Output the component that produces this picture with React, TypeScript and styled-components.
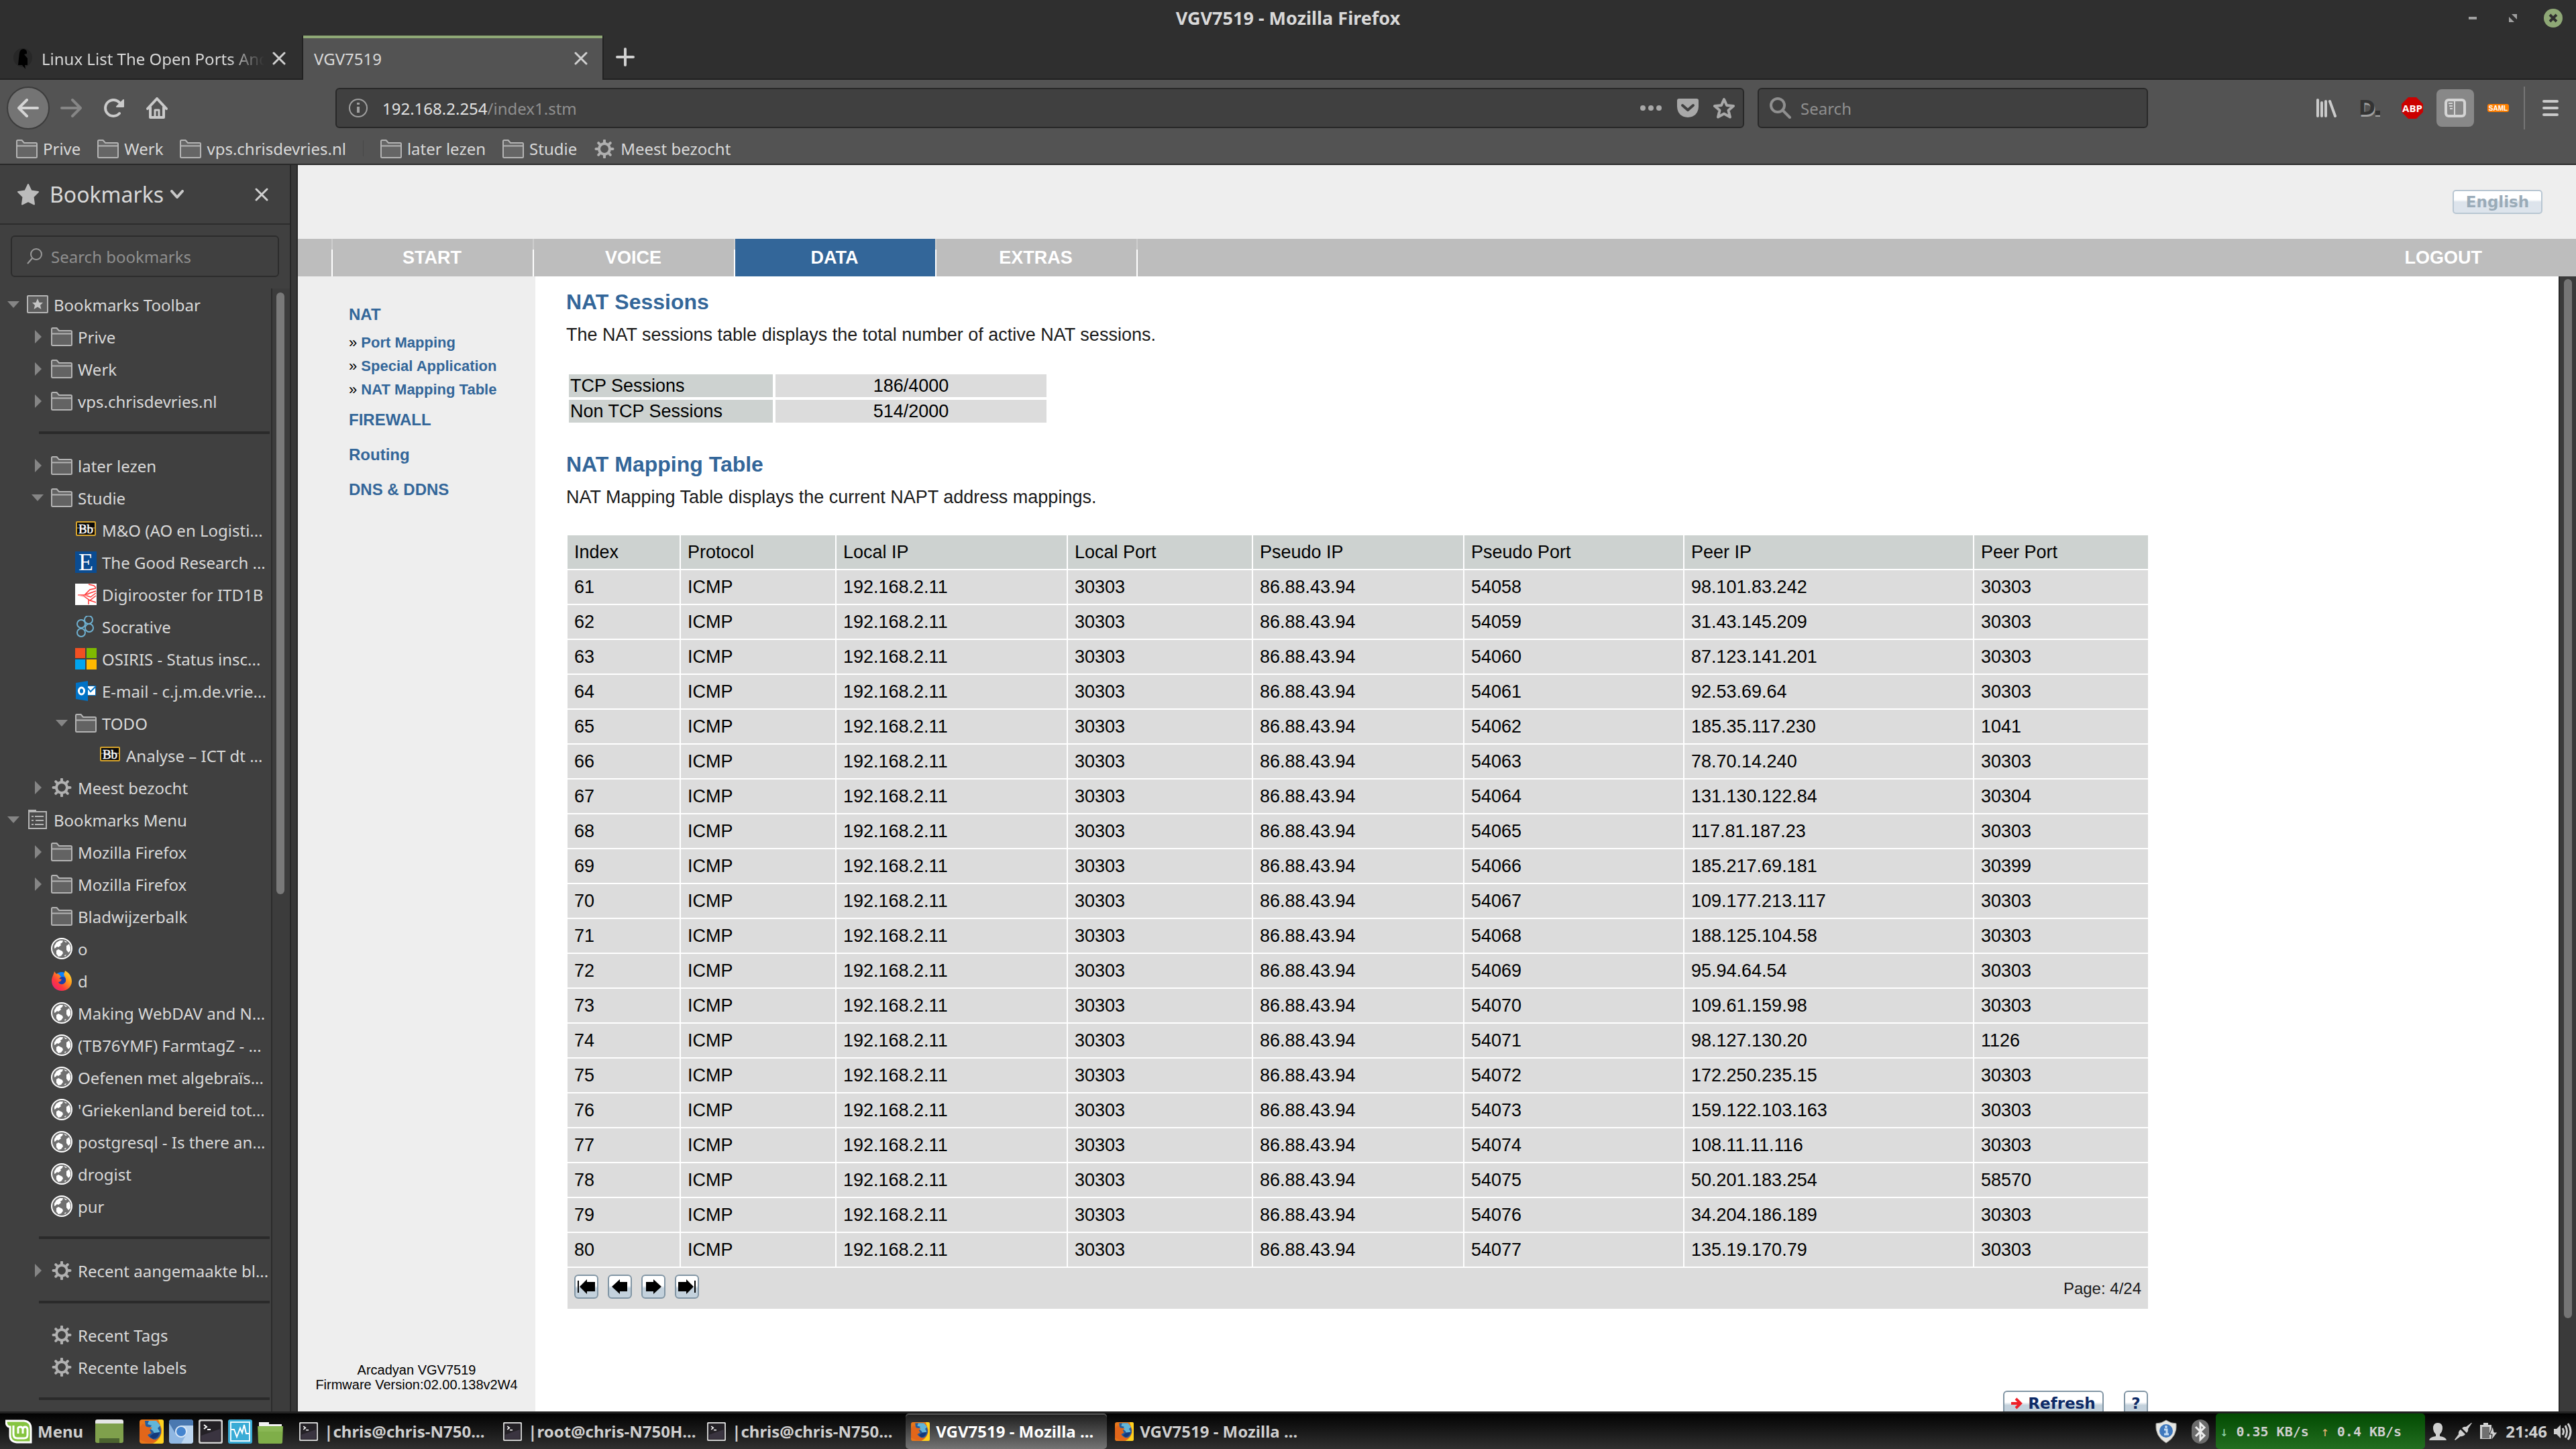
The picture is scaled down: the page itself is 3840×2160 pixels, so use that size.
import React, { useState } from "react";
import styled, { createGlobalStyle, css } from "styled-components";

const GlobalStyle = createGlobalStyle`
  * {
    box-sizing: border-box;
  }
  body {
    margin: 0;
    font-family: "Noto Sans", sans-serif;
    font-size: 24px;
    color: #d9d9d9;
    background-color: #2f2f2f;
  }
  button, input {
    font: inherit;
    color: inherit;
  }
  button {
    padding: 0;
    border: none;
    background: none;
    cursor: pointer;
  }
  ul {
    list-style: none;
    margin: 0;
    padding: 0;
  }
  svg {
    display: block;
    flex: none;
  }
`;

const Desktop = styled.div`
  display: flex;
  flex-direction: column;
  height: 100vh;
  overflow: hidden;
`;

/* window chrome */

const TitleBar = styled.header`
  display: grid;
  grid-template-columns: 1fr auto 1fr;
  align-items: center;

  height: 53px;
  padding: 0 20px;
`;

const Title = styled.h1`
  grid-column: 2;
  margin: 0;
  font-size: 27px;
  font-weight: 700;
`;

const WindowButtons = styled.div`
  display: flex;
  justify-content: flex-end;
  align-items: center;
  gap: 40px;
`;

const TabStrip = styled.div`
  display: flex;
  align-items: stretch;

  height: 66px;
  box-shadow: inset 0 -2px #222222;
`;

const Tab = styled.div<{ $active?: boolean }>`
  display: flex;
  align-items: center;
  gap: 12px;

  width: ${(props) => (props.$active ? 446 : 452)}px;
  padding: ${(props) => (props.$active ? "0 22px 2px 16px" : "2px 26px 0 18px")};
  ${(props) =>
    props.$active &&
    css`
      border-top: 4px solid #8fa876;
      background-color: #535353;
      box-shadow: -2px 0 #222222, 2px 0 #222222;
    `}
`;

const TabLabel = styled.button<{ $fade?: boolean }>`
  flex: 1;
  min-width: 0;
  overflow: hidden;

  text-align: left;
  white-space: nowrap;
  ${(props) =>
    props.$fade &&
    css`
      mask-image: linear-gradient(to right, #000 84%, transparent 100%);
    `}
`;

const NewTab = styled.button`
  display: flex;
  align-items: center;
  padding: 0 20px 2px;
`;

const NavBar = styled.div`
  display: flex;
  align-items: center;

  height: 84px;
  padding: 0 26px 0 10px;
  background-color: #535353;
`;

const NavButtons = styled.div`
  display: flex;
  align-items: center;
  gap: 32px;
  width: 490px;
`;

const BackButton = styled.button`
  display: flex;
  justify-content: center;
  align-items: center;

  width: 64px;
  height: 64px;
  margin-right: -16px;
  border: 2px solid #3c3c3c;
  border-radius: 50%;
  background-color: #747474;
`;

const Field = styled.div`
  display: flex;
  align-items: center;

  height: 60px;
  border: 2px solid #282828;
  border-radius: 6px;
  color: #8f8f8f;
  background-color: #404040;
`;

const UrlField = styled(Field)`
  flex: 1;
  gap: 22px;
  padding: 0 12px 0 18px;
`;

const Url = styled.button`
  flex: 1;
  text-align: left;
  b {
    font-weight: 400;
    color: #e2e2e2;
  }
`;

const SearchField = styled(Field)`
  gap: 14px;
  width: 582px;
  margin: 0 234px 0 20px;
  padding: 0 16px;
`;

const TextInput = styled.input`
  flex: 1;
  min-width: 0;
  padding: 0;
  border: none;
  outline: none;
  background: none;
  &::placeholder {
    color: #8f8f8f;
    opacity: 1;
  }
`;

const Tools = styled.div`
  display: flex;
  align-items: center;
`;

const ToolButton = styled.button<{ $on?: boolean }>`
  display: flex;
  justify-content: center;
  align-items: center;

  width: ${(props) => (props.$on ? 56 : 64)}px;
  height: 56px;
  border-radius: 8px;
  ${(props) =>
    props.$on &&
    css`
      margin: 0 4px;
      background-color: #888888;
    `}
`;

const ToolDivider = styled.span`
  width: 2px;
  height: 64px;
  margin: 0 26px 0 6px;
  background-color: #757575;
`;

const BookmarkBar = styled.nav`
  display: flex;
  align-items: flex-start;
  gap: 25px;

  height: 43px;
  padding: 2px 24px 0;
  border-bottom: 2px solid #282828;
  background-color: #535353;
`;

const BookmarkLink = styled.a`
  display: flex;
  align-items: center;
  gap: 8px;

  color: inherit;
  line-height: 34px;
  text-decoration: none;
  white-space: nowrap;
`;

const BarDivider = styled.span`
  width: 1px;
  height: 24px;
  margin-top: 4px;
  background-color: #484848;
`;

const Body = styled.div`
  flex: 1;
  display: flex;
  min-height: 0;
`;

/* bookmarks sidebar */

const Sidebar = styled.aside`
  display: flex;
  flex-direction: column;

  width: 444px;
  border-right: 2px solid #282828;
  background-color: #404040;
  box-shadow: inset -8px 0 #383838, inset -10px 0 #282828;
`;

const SidebarHeader = styled.div`
  display: flex;
  align-items: center;

  height: 89px;
  margin-right: 10px;
  padding: 0 32px 0 26px;
  border-bottom: 2px solid #2c2c2c;
`;

const SidebarTitle = styled.button`
  flex: 1;
  display: flex;
  align-items: center;
  gap: 10px;
  font-size: 32px;
  svg:first-child {
    margin-right: 6px;
  }
`;

const SidebarSearch = styled(Field)`
  gap: 12px;
  height: 62px;
  margin: 16px 26px 17px 16px;
  padding: 0 22px;
  border-color: #2c2c2c;
`;

const TreeArea = styled.div`
  flex: 1;
  display: flex;
  min-height: 0;
  margin-right: 10px;
`;

const Tree = styled.ul`
  flex: 1;
  min-width: 0;
  overflow: hidden;
`;

const TreeRow = styled.li<{ $level: number }>`
  display: flex;
  align-items: center;

  height: 48px;
  padding-left: ${(props) => props.$level * 36 - 26}px;
  white-space: nowrap;
`;

const Twisty = styled.span`
  display: flex;
  justify-content: center;
  width: 20px;
  margin-right: 10px;
`;

const TreeLabel = styled.span`
  margin-left: 8px;
`;

const TreeSeparator = styled.li`
  height: 4px;
  margin: 21px 2px 23px 58px;
  background-color: #2a2a2a;
`;

const SidebarTrack = styled.div`
  width: 28px;
  padding: 6px;
  border-left: 2px solid #2c2c2c;
  background-color: #3c3c3c;
`;

const SidebarThumb = styled.div`
  width: 12px;
  height: 54%;
  border-radius: 6px;
  background-color: #797979;
`;

/* router page */

const Page = styled.div`
  flex: 1;
  display: flex;
  flex-direction: column;

  min-width: 0;
  font-family: "Liberation Sans", Arial, sans-serif;
  color: #000000;
  background-color: #ffffff;
`;

const PageHeader = styled.div`
  display: flex;
  justify-content: flex-end;

  height: 110px;
  padding: 37px 50px 0;
  background-color: #eeeeee;
`;

const LanguageButton = styled.button`
  width: 134px;
  height: 36px;

  border: 2px solid #b8c6d2;
  border-radius: 5px;
  font-family: "DejaVu Sans", sans-serif;
  font-size: 23px;
  font-weight: 700;
  line-height: 32px;
  color: #9aabb8;
  background: linear-gradient(#ffffff 40%, #dde4ec 50%);
`;

const MainNav = styled.nav`
  display: flex;

  height: 56px;
  padding: 0 140px 0 50px;
  font-size: 27px;
  font-weight: 700;
  line-height: 57px;
  text-align: center;
  background-color: #bdbdbd;
  a {
    color: #ffffff;
    text-decoration: none;
  }
`;

const MainNavLink = styled.a<{ $active?: boolean }>`
  width: 300px;
  background: linear-gradient(#cecece 16px, #ffffff 16px) left / 2px 100% no-repeat
    ${(props) => (props.$active ? "#336699" : "#bdbdbd")};
`;

const LogoutLink = styled.a`
  flex: 1;
  text-align: right;
  background: linear-gradient(#cecece 16px, #ffffff 16px) left / 2px 100% no-repeat;
`;

const Frames = styled.div`
  flex: 1;
  display: flex;
  min-height: 0;
`;

const SideNav = styled.nav`
  display: flex;
  flex-direction: column;

  width: 354px;
  padding: 31px 0 29px;
  background-color: #eeeeee;
  a {
    font-weight: 700;
    color: #336699;
    text-decoration: none;
  }
`;

const SideItem = styled.li`
  padding-left: 76px;
  font-size: 24px;
  line-height: 52px;
`;

const SubList = styled.ul`
  margin: -2px 0 2px;
`;

const SubItem = styled.li`
  padding-left: 76px;
  font-size: 22px;
  line-height: 35px;
`;

const Firmware = styled.p`
  margin: auto 0 0;
  font-size: 20px;
  line-height: 22px;
  text-align: center;
`;

const Content = styled.main`
  flex: 1;
  padding: 19px 46px 0;
  overflow: hidden;
  font-size: 27px;
`;

const Heading = styled.h2`
  margin: 0;
  font-size: 32px;
  line-height: 38px;
  color: #336699;
`;

const Description = styled.p`
  margin: 14px 0 0;
  line-height: 32px;
  color: #1a1a1a;
`;

const SessionTable = styled.table`
  width: 720px;
  margin: 39px 0;
  border-spacing: 4px;
  table-layout: fixed;
  line-height: 30px;
  th {
    width: 304px;
    padding: 2px;
    font-weight: 400;
    text-align: left;
    background-color: #cdd2d0;
  }
  td {
    padding: 2px;
    text-align: center;
    background-color: #dcdcdc;
  }
`;

const MappingTable = styled.table`
  width: 100%;
  max-width: 2360px;
  margin-top: 39px;
  border-spacing: 2px;
  table-layout: fixed;
  th,
  td {
    height: 50px;
    padding: 0 10px;
    font-weight: 400;
    text-align: left;
  }
  th {
    background-color: #cdd2d0;
  }
  td {
    background-color: #dcdcdc;
  }
`;

const Pager = styled.div`
  display: flex;
  align-items: center;
  gap: 14px;

  height: 61px;
  padding-bottom: 5px;
  span {
    margin-left: auto;
    font-size: 24px;
    line-height: 28px;
    padding-top: 5px;
    color: #1a1a1a;
  }
`;

const glossy = css`
  border: 2px solid #8195a4;
  border-radius: 6px;
  background: linear-gradient(#ffffff 45%, #c3d1dc 58%);
`;

const PagerButton = styled.button`
  display: flex;
  justify-content: center;
  align-items: center;

  width: 36px;
  height: 36px;
  ${glossy}
`;

const Actions = styled.div`
  display: flex;
  align-items: flex-start;
  justify-content: flex-end;
  gap: 30px;

  max-width: 2360px;
  margin-top: 120px;
  padding-right: 2px;
`;

const ActionButton = styled.button<{ $wide?: boolean }>`
  display: flex;
  justify-content: center;
  align-items: center;
  gap: 8px;

  width: ${(props) => (props.$wide ? 150 : 36)}px;
  height: 38px;
  font-family: "DejaVu Sans", sans-serif;
  font-size: 23px;
  font-weight: 700;
  color: #0d2a66;
  ${glossy}
`;

const PageTrack = styled.div`
  width: 26px;
  padding: 4px 6px;
  border-left: 2px solid #282828;
  background-color: #3a3a3a;
`;

const PageThumb = styled.div`
  width: 12px;
  height: 92%;
  border-radius: 6px;
  background-color: #757575;
`;

/* desktop panel */

const Taskbar = styled.footer`
  display: flex;
  align-items: stretch;

  height: 56px;
  border-top: 3px solid #222222;
  font-weight: 700;
  color: #cfcfcf;
  background: linear-gradient(#020202, #303030);
`;

const MenuButton = styled.button`
  display: flex;
  align-items: center;
  gap: 8px;
  padding: 0 18px 0 8px;
`;

const Launchers = styled.div`
  display: flex;
  align-items: center;
  gap: 8px;
  margin: 0 16px 0 24px;
`;

const Launcher = styled.button``;

const Tasks = styled.div`
  flex: 1;
  display: flex;
  gap: 4px;
`;

const Task = styled.button<{ $active?: boolean }>`
  display: flex;
  align-items: center;
  gap: 9px;

  width: 300px;
  padding: 0 8px;
  border-radius: 5px;
  white-space: nowrap;
  overflow: hidden;
  ${(props) =>
    props.$active &&
    css`
      color: #ffffff;
      background: linear-gradient(#1c1c1c, #747474);
      box-shadow: inset 0 2px #555555;
    `}
`;

const Tray = styled.div`
  display: flex;
  align-items: center;
  padding-right: 5px;
`;

const Applets = styled.div`
  display: flex;
  align-items: center;
  gap: 20px;
  padding-right: 10px;
`;

const StatusIcons = styled.div`
  display: flex;
  align-items: center;
  gap: 12px;
  padding: 0 2px 0 6px;
`;

const NetSpeed = styled.div`
  display: flex;
  align-items: center;
  gap: 12px;

  height: 53px;
  width: 312px;
  padding-left: 6px;
  border-radius: 5px;
  font-family: "DejaVu Sans Mono", monospace;
  font-size: 20px;
  background: linear-gradient(#024b02, #236e20);
  span {
    font-weight: 400;
    color: #8fd0a8;
  }
  span:nth-of-type(2) {
    margin-left: 6px;
    color: #e0b070;
  }
`;

const Clock = styled.time`
  margin: 0 10px;
`;

/* icons */

const Close = ({ size = 20 }: { size?: number }) => (
  <svg width={size} height={size} viewBox="0 0 20 20" stroke="#d0d0d0" strokeWidth="3" strokeLinecap="round">
    <path d="M2 2L18 18M18 2L2 18" />
  </svg>
);

const Folder = () => (
  <svg width="32" height="28" viewBox="0 0 32 28" fill="#6b6b6b" fillOpacity="0.8" stroke="#b4b4b4" strokeWidth="2" strokeLinejoin="round">
    <path d="M1 26V2.500Q1 1 2.500 1H8.500L12 5H29.500Q31 5 31 6.500V25.500Q31 27 29.500 27H2.500Q1 27 1 25.500Z" />
    <path d="M1 9.500H31" />
  </svg>
);

const Gear = () => (
  <svg width="32" height="28" viewBox="-16 -14 32 28" fill="none" stroke="#b0b0b0">
    <circle r="8" strokeWidth="4" />
    {[0, 45, 90, 135, 180, 225, 270, 315].map((a) => (
      <path key={a} d="M0 -9V-12.500" strokeWidth="4" strokeLinecap="round" transform={`rotate(${a})`} />
    ))}
  </svg>
);

const Globe = () => (
  <svg width="32" height="32" viewBox="0 0 32 32">
    <circle cx="16" cy="16" r="15" fill="#707070" stroke="#fff" strokeWidth="2" />
    <path
      fill="#fff"
      d="M5 12L8 7L13 4L18 4L17 7L14 9L15 11L11 14L9 13L7 15L5 16ZM19 4L24 6L22 7ZM23 12L27 9L29 14V19L26 22L23 18ZM8 19L11 17L17 20L18 23L15 27L11 28L8 24ZM20 26L23 25L21 28Z"
    />
  </svg>
);

const Blackboard = () => (
  <svg width="32" height="32" viewBox="0 0 32 32">
    <rect x="2" y="4" width="28" height="20" rx="1" fill="#080808" stroke="#d8a52c" strokeWidth="2" />
    <path d="M3 13H29" stroke="#5a5a5a" strokeWidth="2" />
    <text x="16" y="21" textAnchor="middle" fontFamily="Liberation Serif, serif" fontSize="19" fill="#fff" stroke="#fff" strokeWidth="0.500">
      Bb
    </text>
  </svg>
);

const Elsevier = () => (
  <svg width="32" height="32" viewBox="0 0 32 32">
    <rect width="32" height="32" fill="#0a4c92" />
    <text x="16" y="28" textAnchor="middle" fontFamily="Liberation Serif, serif" fontSize="36" fill="#fff">
      E
    </text>
  </svg>
);

const Rooster = () => (
  <svg width="32" height="32" viewBox="0 0 32 32" fill="none" stroke="#f33" strokeWidth="1.500">
    <rect width="32" height="32" fill="#fff" stroke="none" />
    <path d="M4 17H14L22 9L31 7M14 17L31 11M14 17L23 20L31 14M12 18L22 25L31 18M20 24V31M22 25L31 28M20 1L28 3L31 6" />
    <path d="M4 17L13 19L20 16" stroke="#f99" />
  </svg>
);

const Socrative = () => (
  <svg width="32" height="32" viewBox="0 0 32 32" fill="none" stroke="#6fb1d1" strokeWidth="2">
    <circle cx="20" cy="6" r="6" />
    <circle cx="9" cy="12" r="6" />
    <circle cx="21" cy="18" r="6" />
    <circle cx="9" cy="25" r="6" />
  </svg>
);

const Microsoft = () => (
  <svg width="32" height="32" viewBox="0 0 32 32">
    <path fill="#f25022" d="M0 0H15V15H0Z" />
    <path fill="#7fba00" d="M17 0H32V15H17Z" />
    <path fill="#00a4ef" d="M0 17H15V32H0Z" />
    <path fill="#ffb900" d="M17 17H32V32H17Z" />
  </svg>
);

const Outlook = () => (
  <svg width="32" height="32" viewBox="0 0 32 32">
    <path fill="#fff" stroke="#0072c6" d="M18 8.500H30.500V22.500H18Z" />
    <path fill="none" stroke="#0072c6" strokeWidth="2" d="M19 12L23 17L31 9" />
    <path fill="#0072c6" d="M1 4L19 1V31L1 28Z" />
    <ellipse cx="9.500" cy="16" rx="4" ry="5" fill="none" stroke="#fff" strokeWidth="3" />
  </svg>
);

const FirefoxFlame = () => (
  <svg width="32" height="32" viewBox="0 0 32 32">
    <defs>
      <linearGradient id="flame" x1="0" y1="1" x2="1" y2="0">
        <stop offset="0" stopColor="#e31587" />
        <stop offset="0.350" stopColor="#ff3b3b" />
        <stop offset="0.650" stopColor="#ff9a1a" />
        <stop offset="1" stopColor="#fff04a" />
      </linearGradient>
    </defs>
    <circle cx="16" cy="15" r="12" fill="#0a84ff" />
    <circle cx="17" cy="17" r="7" fill="#1b3fa8" />
    <path
      fill="url(#flame)"
      d="M21 1C29 5 31 12 31 17C31 25 24 31 16 31C8 31 1 25 1 16C1 11 4 7 5 2L8 6C10 5 12 6 13 8L15 10L12 13L16 14L14 17L11 18C13 23 20 22 22 17C23 12 20 9 19 7Z"
    />
  </svg>
);

const ToolbarFolder = () => (
  <svg width="32" height="28" viewBox="0 0 32 28">
    <rect x="1" y="1" width="30" height="25" rx="1" fill="#5c5c5c" stroke="#b4b4b4" strokeWidth="2" />
    <path fill="#c4c4c4" d="M16 5L18.500 11H24L20 15L21.500 21L16 17.500L10.500 21L12 15L8 11H13.500Z" />
  </svg>
);

const MenuFolder = () => (
  <svg width="32" height="30" viewBox="0 0 32 30" fill="none" stroke="#b4b4b4" strokeWidth="2">
    <path d="M3 3H29V28H3Z" fill="#4a4a4a" />
    <path d="M2 1.500H14" strokeWidth="3" />
    <path d="M7 10H10M12 10H25M7 16H10M13 16H25M7 22H10M12 22H25" />
  </svg>
);

const SolidStar = () => (
  <svg width="32" height="32" viewBox="0 0 32 32">
    <path
      fill="#bcbcbc"
      stroke="#bcbcbc"
      strokeWidth="2"
      strokeLinejoin="round"
      d="M16 1L20.500 10.500L31 12L23.500 19.500L25 30.500L16 26L7 30.500L8.500 19.500L1 12L11.500 10.500Z"
    />
  </svg>
);

const Arrow = ({ open }: { open: boolean }) => (
  <svg width="20" height="20" viewBox="0 0 20 20" fill="#858585">
    <path d={open ? "M1 5H19L10 15Z" : "M6 0V20L16 10Z"} />
  </svg>
);

const FirefoxBox = ({ size }: { size: number }) => (
  <svg width={size} height={size} viewBox="0 0 36 36">
    <rect width="36" height="36" rx="4" fill="#e8771a" />
    <path fill="#ffd21f" d="M28 0H33Q36 0 36 3V33Q36 36 33 36H20Q34 28 33 14Z" />
    <path fill="#235c9e" d="M8 2H24Q33 8 32 20Q29 31 19 31Q12 30 11 23L17 18L9 11Z" />
    <path fill="#62b5d8" d="M14 2H25L31 9L27 13L30 18L24 24L20 17L15 13L18 9L12 7Z" />
    <path fill="#e2661a" d="M0 12L5 6L11 11L19 12L14 17L18 20L12 23Q17 31 27 30Q20 36 10 34L0 30Z" />
    <path fill="#15397a" d="M22 20L30 19Q28 28 20 29L15 25Z" />
  </svg>
);

const Terminal = ({ size }: { size: number }) => (
  <svg width={size} height={size} viewBox="0 0 36 36">
    <rect x="1" y="1" width="34" height="34" rx="3" fill="#242126" stroke="#cfcfcf" strokeWidth="3" />
    <path d="M4 24L32 14V32H4Z" fill="#3a3440" />
    <path d="M8 8L12 11L8 14M13 15H18" fill="none" stroke="#fff" strokeWidth="2" />
  </svg>
);

const ChromiumBox = () => (
  <svg width="36" height="36" viewBox="0 0 36 36">
    <rect width="36" height="36" rx="4" fill="#8fb7e2" />
    <path fill="#4a78b0" d="M0 4Q0 0 4 0H32Q36 0 36 4V9H18L9 20L0 5Z" />
    <path fill="#bcd6f0" d="M18 9H36V32Q36 36 32 36H18L27 20Z" />
    <circle cx="18" cy="18" r="8" fill="#4585cf" stroke="#dce9f7" strokeWidth="2" />
  </svg>
);

const MonitorBox = () => (
  <svg width="36" height="36" viewBox="0 0 36 36" fill="none">
    <rect width="36" height="36" rx="3" fill="#39acd6" />
    <rect x="4" y="4" width="28" height="28" stroke="#e8f7fc" strokeWidth="2" />
    <path d="M5 15H9L13 26L18 13L21 20L24 8L27 21H31" stroke="#fff" strokeWidth="2" />
  </svg>
);

const FilesBox = () => (
  <svg width="38" height="36" viewBox="0 0 38 36">
    <path fill="#f2f2f2" d="M2 4H17V7H36V14H2Z" />
    <path fill="#7fae49" d="M0 10H38L37 34Q37 36 35 36H3Q1 36 1 34Z" />
    <path fill="#94c05f" d="M1 11H37V18H1Z" opacity="0.500" />
  </svg>
);

const ShowDesktop = () => (
  <svg width="42" height="36" viewBox="0 0 42 36">
    <rect y="1" width="42" height="34" rx="3" fill="#7fa04c" />
    <path fill="#e6e6e6" d="M0 6V3Q0 0 3 0H39Q42 0 42 3V6Z" />
    <path fill="#4b6330" d="M6 28H36V35H6Z" />
  </svg>
);

const Mint = () => (
  <svg width="40" height="36" viewBox="0 0 40 36" fill="none">
    <path d="M1 2H28Q38 3 38 14V34H17Q7 33 7 24V11Q1 11 1 2Z" fill="#86c440" stroke="#fff" strokeWidth="3" />
    <path d="M12 9V22Q12 28 18 28H28Q33 28 33 23V15Q33 11 29.500 11T26 15V21M26 15Q26 11 22 11T19 15V21" stroke="#fff" strokeWidth="3" />
  </svg>
);

const ArrowStep = ({ back, edge }: { back?: boolean; edge?: boolean }) => (
  <svg width="30" height="24" viewBox="0 0 30 24" fill="#000">
    <g transform={back ? "translate(30 0) scale(-1 1)" : undefined}>
      <path d={edge ? "M2 5H14V1L25 12L14 23V19H2Z" : "M4 5H15V1L27 12L15 23V19H4Z"} />
      {edge && <path d="M26 3H28V21H26Z" />}
    </g>
  </svg>
);

/* data */

interface ITreeItem {
  label: string;
  level: number;
  icon: React.ReactNode;
  open?: boolean;
}

const tree: (ITreeItem | null)[] = [
  { label: "Bookmarks Toolbar", level: 1, icon: <ToolbarFolder />, open: true },
  { label: "Prive", level: 2, icon: <Folder />, open: false },
  { label: "Werk", level: 2, icon: <Folder />, open: false },
  { label: "vps.chrisdevries.nl", level: 2, icon: <Folder />, open: false },
  null,
  { label: "later lezen", level: 2, icon: <Folder />, open: false },
  { label: "Studie", level: 2, icon: <Folder />, open: true },
  { label: "M&O (AO en Logisti...", level: 3, icon: <Blackboard /> },
  { label: "The Good Research ...", level: 3, icon: <Elsevier /> },
  { label: "Digirooster for ITD1B", level: 3, icon: <Rooster /> },
  { label: "Socrative", level: 3, icon: <Socrative /> },
  { label: "OSIRIS - Status insc...", level: 3, icon: <Microsoft /> },
  { label: "E-mail - c.j.m.de.vrie...", level: 3, icon: <Outlook /> },
  { label: "TODO", level: 3, icon: <Folder />, open: true },
  { label: "Analyse – ICT dt ...", level: 4, icon: <Blackboard /> },
  { label: "Meest bezocht", level: 2, icon: <Gear />, open: false },
  { label: "Bookmarks Menu", level: 1, icon: <MenuFolder />, open: true },
  { label: "Mozilla Firefox", level: 2, icon: <Folder />, open: false },
  { label: "Mozilla Firefox", level: 2, icon: <Folder />, open: false },
  { label: "Bladwijzerbalk", level: 2, icon: <Folder /> },
  { label: "o", level: 2, icon: <Globe /> },
  { label: "d", level: 2, icon: <FirefoxFlame /> },
  { label: "Making WebDAV and N...", level: 2, icon: <Globe /> },
  { label: "(TB76YMF) FarmtagZ - ...", level: 2, icon: <Globe /> },
  { label: "Oefenen met algebraïs...", level: 2, icon: <Globe /> },
  { label: "'Griekenland bereid tot...", level: 2, icon: <Globe /> },
  { label: "postgresql - Is there an...", level: 2, icon: <Globe /> },
  { label: "drogist", level: 2, icon: <Globe /> },
  { label: "pur", level: 2, icon: <Globe /> },
  null,
  { label: "Recent aangemaakte bl...", level: 2, icon: <Gear />, open: false },
  null,
  { label: "Recent Tags", level: 2, icon: <Gear /> },
  { label: "Recente labels", level: 2, icon: <Gear /> },
  null,
];

const columns = [
  { name: "Index", width: 167 },
  { name: "Protocol", width: 230 },
  { name: "Local IP", width: 343 },
  { name: "Local Port", width: 274 },
  { name: "Pseudo IP", width: 313 },
  { name: "Pseudo Port", width: 326 },
  { name: "Peer IP", width: 430 },
  { name: "Peer Port", width: 259 },
];

// pseudo port, peer ip, peer port
const mappings: [number, string, number][] = [
  [54058, "98.101.83.242", 30303],
  [54059, "31.43.145.209", 30303],
  [54060, "87.123.141.201", 30303],
  [54061, "92.53.69.64", 30303],
  [54062, "185.35.117.230", 1041],
  [54063, "78.70.14.240", 30303],
  [54064, "131.130.122.84", 30304],
  [54065, "117.81.187.23", 30303],
  [54066, "185.217.69.181", 30399],
  [54067, "109.177.213.117", 30303],
  [54068, "188.125.104.58", 30303],
  [54069, "95.94.64.54", 30303],
  [54070, "109.61.159.98", 30303],
  [54071, "98.127.130.20", 1126],
  [54072, "172.250.235.15", 30303],
  [54073, "159.122.103.163", 30303],
  [54074, "108.11.11.116", 30303],
  [54075, "50.201.183.254", 58570],
  [54076, "34.204.186.189", 30303],
  [54077, "135.19.170.79", 30303],
];

const sections = ["START", "VOICE", "DATA", "EXTRAS"];

const Chrome = () => (
  <>
    <TitleBar>
      <Title>VGV7519 - Mozilla Firefox</Title>
      <WindowButtons>
        <button aria-label="Minimize">
          <svg width="20" height="28" viewBox="0 0 20 28">
            <path fill="#a0a0a0" d="M8 12H20V16H8Z" />
          </svg>
        </button>
        <button aria-label="Restore">
          <svg width="20" height="28" viewBox="0 0 20 28">
            <path fill="#a0a0a0" d="M12 8H20V16ZM8 12L16 20H8Z" />
          </svg>
        </button>
        <button aria-label="Close">
          <svg width="28" height="28" viewBox="0 0 28 28">
            <circle cx="14" cy="14" r="14" fill="#8fa876" />
            <path d="M9 9L19 19M19 9L9 19" stroke="#2f2f2f" strokeWidth="4" />
          </svg>
        </button>
      </WindowButtons>
    </TitleBar>
    <TabStrip>
      <Tab>
        <svg width="32" height="32" viewBox="0 0 32 32">
          <circle cx="16" cy="15" r="14" fill="#272727" />
          <path fill="#000" d="M11 8Q12 2 17 2Q23 3 22 9L18 10L23 16V26H19L20 32L15 26H9L10 16Z" />
        </svg>
        <TabLabel $fade>Linux List The Open Ports And</TabLabel>
        <button aria-label="Close tab">
          <Close />
        </button>
      </Tab>
      <Tab $active>
        <TabLabel>VGV7519</TabLabel>
        <button aria-label="Close tab">
          <Close />
        </button>
      </Tab>
      <NewTab aria-label="New tab">
        <svg width="28" height="28" viewBox="0 0 28 28" stroke="#d0d0d0" strokeWidth="4" strokeLinecap="round">
          <path d="M14 2V26M2 14H26" />
        </svg>
      </NewTab>
    </TabStrip>
    <NavBar>
      <NavButtons>
        <BackButton aria-label="Back">
          <svg width="32" height="28" viewBox="0 0 32 28" fill="none" stroke="#d4d4d4" strokeWidth="4" strokeLinecap="round" strokeLinejoin="round">
            <path d="M30 14H3M14 2L2 14L14 26" />
          </svg>
        </BackButton>
        <button aria-label="Forward">
          <svg width="32" height="28" viewBox="0 0 32 28" fill="none" stroke="#868686" strokeWidth="4" strokeLinecap="round" strokeLinejoin="round">
            <path d="M2 14H29M18 2L30 14L18 26" />
          </svg>
        </button>
        <button aria-label="Reload">
          <svg width="32" height="28" viewBox="0 0 32 28" fill="none" stroke="#cacaca" strokeWidth="4" strokeLinecap="round" strokeLinejoin="round">
            <path d="M24 22A12 12 0 1 1 26 9" />
            <path d="M30 2V12H20Z" fill="#cacaca" strokeWidth="2" />
          </svg>
        </button>
        <button aria-label="Home">
          <svg width="32" height="32" viewBox="0 0 32 32" fill="none" stroke="#cacaca" strokeWidth="4" strokeLinecap="round" strokeLinejoin="round">
            <path d="M2 17L16 2L30 17M6 15V30H26V15" />
            <path d="M13 29V19H19V29" strokeWidth="3" />
          </svg>
        </button>
      </NavButtons>
      <UrlField>
        <svg width="28" height="28" viewBox="0 0 28 28" fill="none" stroke="#a0a0a0" strokeWidth="2">
          <circle cx="14" cy="14" r="13" />
          <path d="M14 12V21M14 6V9" strokeWidth="4" />
        </svg>
        <Url>
          <b>192.168.2.254</b>/index1.stm
        </Url>
        <svg width="34" height="10" viewBox="0 0 34 10" fill="#a8a8a8">
          <circle cx="5" cy="5" r="4" />
          <circle cx="17" cy="5" r="4" />
          <circle cx="29" cy="5" r="4" />
        </svg>
        <svg width="32" height="28" viewBox="0 0 32 28">
          <path fill="#a8a8a8" d="M3 0H29Q32 0 32 3V12Q31 27 16 28Q1 27 0 12V3Q0 0 3 0Z" />
          <path d="M8 10L16 17L24 10" fill="none" stroke="#404040" strokeWidth="4" strokeLinecap="round" strokeLinejoin="round" />
        </svg>
        <svg width="32" height="32" viewBox="0 0 32 32" fill="none" stroke="#a8a8a8" strokeWidth="4" strokeLinejoin="round">
          <path d="M16 3L20 12L30 13L22.500 19.500L25 29.500L16 24.500L7 29.500L9.500 19.500L2 13L12 12Z" />
        </svg>
      </UrlField>
      <SearchField>
        <svg width="32" height="32" viewBox="0 0 32 32" fill="none" stroke="#8f8f8f" strokeWidth="4" strokeLinecap="round">
          <circle cx="12" cy="12" r="10" />
          <path d="M19 19L30 30" />
        </svg>
        <TextInput aria-label="Search" placeholder="Search" />
      </SearchField>
      <Tools>
        <ToolButton aria-label="Library">
          <svg width="32" height="28" viewBox="0 0 32 28" stroke="#cacaca" strokeWidth="4" strokeLinecap="round">
            <path d="M3 2V26M9 6V26M15 4V26M21 4L29 26" />
          </svg>
        </ToolButton>
        <ToolButton aria-label="Disconnect">
          <svg width="32" height="40" viewBox="0 -4 32 40">
            <text x="1" y="29" fontFamily="DejaVu Sans" fontSize="30" fontWeight="700" fill="#a0a0a0">
              D
            </text>
            <text x="0" y="26" fontFamily="DejaVu Sans" fontSize="30" fontWeight="700" fill="#333">
              D
            </text>
            <path fill="#333" d="M25 20H32V26H25Z" />
            <path fill="#a0a0a0" d="M25 27H32V29H25Z" />
          </svg>
        </ToolButton>
        <ToolButton aria-label="Adblock Plus">
          <svg width="32" height="32" viewBox="0 0 32 32">
            <path fill="#cc0000" d="M10 0H22L32 10V22L22 32H10L0 22V10Z" />
            <text x="16" y="22" textAnchor="middle" fontFamily="Open Sans, sans-serif" fontSize="15" fontWeight="700" fill="#fff">
              ABP
            </text>
          </svg>
        </ToolButton>
        <ToolButton $on aria-label="Sidebars">
          <svg width="32" height="28" viewBox="0 0 32 28" fill="none" stroke="#d4d4d4">
            <rect x="2" y="2" width="28" height="24" rx="4" strokeWidth="4" />
            <path d="M15 3V25M6 7H12M7 11H12M8 15H12" strokeWidth="2" />
          </svg>
        </ToolButton>
        <ToolButton aria-label="SAML">
          <svg width="32" height="12" viewBox="0 0 32 12">
            <rect width="32" height="12" rx="3" fill="#ff7f00" />
            <text x="16" y="10" textAnchor="middle" fontFamily="Liberation Sans, sans-serif" fontSize="10" fontWeight="700" fill="#fff">
              SAML
            </text>
          </svg>
        </ToolButton>
        <ToolDivider />
        <button aria-label="Open menu">
          <svg width="24" height="24" viewBox="0 0 24 24" stroke="#cacaca" strokeWidth="4" strokeLinecap="round">
            <path d="M2 2H22M2 12H22M2 22H22" />
          </svg>
        </button>
      </Tools>
    </NavBar>
    <BookmarkBar>
      {["Prive", "Werk", "vps.chrisdevries.nl"].map((name) => (
        <BookmarkLink key={name} href="#">
          <Folder />
          {name}
        </BookmarkLink>
      ))}
      <BarDivider />
      {["later lezen", "Studie"].map((name) => (
        <BookmarkLink key={name} href="#">
          <Folder />
          {name}
        </BookmarkLink>
      ))}
      <BookmarkLink href="#">
        <Gear />
        Meest bezocht
      </BookmarkLink>
    </BookmarkBar>
  </>
);

const Bookmarks = () => (
  <Sidebar>
    <SidebarHeader>
      <SidebarTitle>
        <SolidStar />
        Bookmarks
        <svg width="20" height="14" viewBox="0 0 20 14" fill="none" stroke="#c8c8c8" strokeWidth="4" strokeLinecap="round" strokeLinejoin="round">
          <path d="M2 2L10 11L18 2" />
        </svg>
      </SidebarTitle>
      <button aria-label="Close sidebar">
        <Close />
      </button>
    </SidebarHeader>
    <SidebarSearch>
      <svg width="24" height="24" viewBox="0 0 24 24" fill="none" stroke="#9a9a9a" strokeWidth="2">
        <circle cx="14" cy="9" r="8" />
        <path d="M8 15L1 23" />
      </svg>
      <TextInput aria-label="Search bookmarks" placeholder="Search bookmarks" />
    </SidebarSearch>
    <TreeArea>
      <Tree>
        {tree.map((item, index) =>
          item ? (
            <TreeRow key={index} $level={item.level}>
              <Twisty>{item.open !== undefined && <Arrow open={item.open} />}</Twisty>
              {item.icon}
              <TreeLabel>{item.label}</TreeLabel>
            </TreeRow>
          ) : (
            <TreeSeparator key={index} />
          )
        )}
      </Tree>
      <SidebarTrack>
        <SidebarThumb />
      </SidebarTrack>
    </TreeArea>
  </Sidebar>
);

const Router = () => {
  const [section, setSection] = useState("DATA");

  return (
    <Page>
      <PageHeader>
        <LanguageButton>English</LanguageButton>
      </PageHeader>
      <MainNav>
        {sections.map((name) => (
          <MainNavLink key={name} href="#" $active={name === section} onClick={() => setSection(name)}>
            {name}
          </MainNavLink>
        ))}
        <LogoutLink href="#">LOGOUT</LogoutLink>
      </MainNav>
      <Frames>
        <SideNav>
          <ul>
            <SideItem>
              <a href="#">NAT</a>
            </SideItem>
            <li>
              <SubList>
                {["Port Mapping", "Special Application", "NAT Mapping Table"].map((name) => (
                  <SubItem key={name}>
                    » <a href="#">{name}</a>
                  </SubItem>
                ))}
              </SubList>
            </li>
            {["FIREWALL", "Routing", "DNS & DDNS"].map((name) => (
              <SideItem key={name}>
                <a href="#">{name}</a>
              </SideItem>
            ))}
          </ul>
          <Firmware>
            Arcadyan VGV7519
            <br />
            Firmware Version:02.00.138v2W4
          </Firmware>
        </SideNav>
        <Content>
          <Heading>NAT Sessions</Heading>
          <Description>The NAT sessions table displays the total number of active NAT sessions.</Description>
          <SessionTable>
            <tbody>
              <tr>
                <th scope="row">TCP Sessions</th>
                <td>186/4000</td>
              </tr>
              <tr>
                <th scope="row">Non TCP Sessions</th>
                <td>514/2000</td>
              </tr>
            </tbody>
          </SessionTable>
          <Heading>NAT Mapping Table</Heading>
          <Description>NAT Mapping Table displays the current NAPT address mappings.</Description>
          <MappingTable>
            <colgroup>
              {columns.map((column) => (
                <col key={column.name} width={column.width} />
              ))}
            </colgroup>
            <thead>
              <tr>
                {columns.map((column) => (
                  <th key={column.name} scope="col">
                    {column.name}
                  </th>
                ))}
              </tr>
            </thead>
            <tbody>
              {mappings.map(([pseudoPort, peerIp, peerPort], index) => (
                <tr key={pseudoPort}>
                  <td>{index + 61}</td>
                  <td>ICMP</td>
                  <td>192.168.2.11</td>
                  <td>30303</td>
                  <td>86.88.43.94</td>
                  <td>{pseudoPort}</td>
                  <td>{peerIp}</td>
                  <td>{peerPort}</td>
                </tr>
              ))}
            </tbody>
            <tfoot>
              <tr>
                <td colSpan={8}>
                  <Pager>
                    <PagerButton aria-label="First page">
                      <ArrowStep back edge />
                    </PagerButton>
                    <PagerButton aria-label="Previous page">
                      <ArrowStep back />
                    </PagerButton>
                    <PagerButton aria-label="Next page">
                      <ArrowStep />
                    </PagerButton>
                    <PagerButton aria-label="Last page">
                      <ArrowStep edge />
                    </PagerButton>
                    <span>Page: 4/24</span>
                  </Pager>
                </td>
              </tr>
            </tfoot>
          </MappingTable>
          <Actions>
            <ActionButton $wide>
              <svg width="17" height="18" viewBox="0 0 17 18" fill="none" stroke="#ee2028" strokeWidth="4">
                <path d="M0 9H13M7 2L14 9L7 16" />
              </svg>
              Refresh
            </ActionButton>
            <ActionButton>?</ActionButton>
          </Actions>
        </Content>
        <PageTrack>
          <PageThumb />
        </PageTrack>
      </Frames>
    </Page>
  );
};

const Panel = () => (
  <Taskbar>
    <MenuButton>
      <Mint />
      Menu
    </MenuButton>
    <Launcher aria-label="Show desktop">
      <ShowDesktop />
    </Launcher>
    <Launchers>
      <Launcher aria-label="Firefox">
        <FirefoxBox size={36} />
      </Launcher>
      <Launcher aria-label="Chromium">
        <ChromiumBox />
      </Launcher>
      <Launcher aria-label="Terminal">
        <Terminal size={36} />
      </Launcher>
      <Launcher aria-label="System monitor">
        <MonitorBox />
      </Launcher>
      <Launcher aria-label="Files">
        <FilesBox />
      </Launcher>
    </Launchers>
    <Tasks>
      {["|chris@chris-N750...", "|root@chris-N750H...", "|chris@chris-N750..."].map((name, index) => (
        <Task key={index}>
          <Terminal size={28} />
          {name}
        </Task>
      ))}
      <Task $active>
        <FirefoxBox size={28} />
        VGV7519 - Mozilla ...
      </Task>
      <Task>
        <FirefoxBox size={28} />
        VGV7519 - Mozilla ...
      </Task>
    </Tasks>
    <Tray>
      <Applets>
        <svg width="36" height="36" viewBox="0 0 36 36">
          <path fill="#e6e6e2" stroke="#9a9a96" d="M18 1Q25 6 33 6Q35 25 18 35Q1 25 3 6Q11 6 18 1Z" />
          <circle cx="18" cy="17" r="10" fill="#3f78bd" />
          <path d="M15 15H19V22M15 22H22" fill="none" stroke="#c4dcf4" strokeWidth="3" />
          <circle cx="18" cy="11" r="2" fill="#c4dcf4" />
        </svg>
        <svg width="26" height="36" viewBox="0 0 26 36">
          <rect width="26" height="36" rx="13" fill="#6c6c6c" />
          <path d="M6 11L19 24L13 30V6L19 12L6 25" fill="none" stroke="#ededed" strokeWidth="3" />
        </svg>
      </Applets>
      <NetSpeed>
        <span>↓</span>0.35 KB/s<span>↑</span>0.4 KB/s
      </NetSpeed>
      <StatusIcons>
        <svg width="26" height="26" viewBox="0 0 26 26" fill="#cfcfcf">
          <path d="M13 0Q20 0 20 8Q20 13 16 17V20Q25 21 26 26H0Q1 21 10 20V17Q6 13 6 8Q6 0 13 0Z" />
        </svg>
        <svg width="26" height="26" viewBox="0 0 26 26" fill="#cfcfcf">
          <path d="M26 0L20 9Q21 12 18 15L11 8Q14 5 17 6L25 0ZM9 10L16 17Q13 21 9 20L1 26L0 25L6 17Q5 13 9 10Z" />
        </svg>
        <svg width="26" height="26" viewBox="0 0 26 26">
          <path fill="#cfcfcf" d="M5 0H12V3H17V24H0V3H5Z" />
          <path fill="#707070" d="M3 6H14V23H3Z" />
          <path fill="#cfcfcf" stroke="#1c1c1c" d="M19 5L14 17H18L17 26L26 14H21Z" />
        </svg>
      </StatusIcons>
      <Clock>21:46</Clock>
      <svg width="28" height="26" viewBox="0 0 28 26" fill="none" stroke="#cfcfcf" strokeWidth="3">
        <path d="M0 9H4L10 3V23L4 17H0Z" fill="#cfcfcf" stroke="none" />
        <path d="M13 8Q16 13 13 18M17 4Q22 13 17 22M21 1Q29 13 21 25" />
      </svg>
    </Tray>
  </Taskbar>
);

const App = () => (
  <>
    <GlobalStyle />
    <Desktop>
      <Chrome />
      <Body>
        <Bookmarks />
        <Router />
      </Body>
      <Panel />
    </Desktop>
  </>
);

export default App;
